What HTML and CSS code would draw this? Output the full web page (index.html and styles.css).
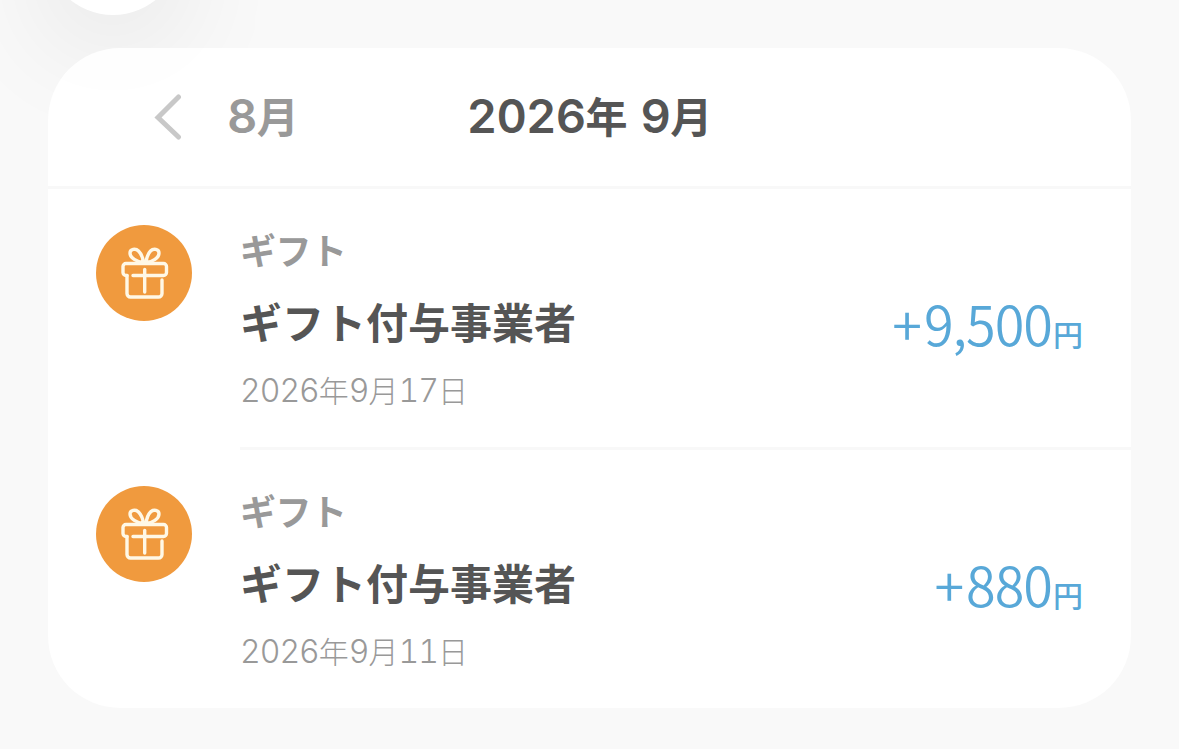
FILE: index.html
```html
<!DOCTYPE html>
<html lang="ja">
<head>
    <meta charset="UTF-8">
    <meta name="viewport" content="width=device-width, initial-scale=1.0">
    <title>ギフト履歴</title>
    <link rel="stylesheet" href="styles.css">
</head>
<body>
    <div class="round-button"></div>

    <svg width="0" height="0" class="sprite">
        <symbol id="gift" viewBox="0 0 96 96">
            <g fill="none" stroke="#fff8e6" stroke-width="3.400" stroke-linecap="round" stroke-linejoin="round">
                <path d="M47.500 37.500C41 37 34 33 34 28c0-4 5.500-5 8.500-2 3 3 4.500 7.500 5 11.500zM50 37.500c6.500-.5 13-4.500 13-9.500 0-4-5.500-5-8.500-2-3 3-4 7.500-4.500 11.500z"/>
                <path d="M31 50.500h-1a3 3 0 0 1-3-3v-6a3 3 0 0 1 3-3h37.500a3 3 0 0 1 3 3v6a3 3 0 0 1-3 3H37"/>
                <path d="M31 50.500v18a3.500 3.500 0 0 0 3.500 3.500h28a3.500 3.500 0 0 0 3.500-3.500V55"/>
                <path d="M48.700 44.500v22.500"/>
            </g>
        </symbol>
    </svg>

    <main class="card">
        <header class="month-nav">
            <a class="prev" href="#">
                <svg class="chevron" viewBox="0 0 28 46">
                    <path d="M24.500 3L4 23.500 24.500 43" fill="none" stroke="#c8c8c8" stroke-width="5" stroke-linecap="round"/>
                </svg>
                <span class="label"><span class="num">8</span>月</span>
            </a>
            <h1 class="month label"><span class="num">2026</span>年<span class="num gap">9</span>月</h1>
        </header>

        <ul class="history">
            <li class="item">
                <svg class="icon"><use href="#gift"/></svg>
                <div class="detail">
                    <div class="info">
                        <p class="type">ギフト</p>
                        <p class="name">ギフト付与事業者</p>
                        <p class="date"><span class="day">2026</span>年<span class="day">9</span>月<span class="day">17</span>日</p>
                    </div>
                    <p class="amount"><span class="plus">+</span>9,500<span class="yen">円</span></p>
                </div>
            </li>
            <li class="item">
                <svg class="icon"><use href="#gift"/></svg>
                <div class="detail">
                    <div class="info">
                        <p class="type">ギフト</p>
                        <p class="name">ギフト付与事業者</p>
                        <p class="date"><span class="day">2026</span>年<span class="day">9</span>月<span class="day">11</span>日</p>
                    </div>
                    <p class="amount"><span class="plus">+</span>880<span class="yen">円</span></p>
                </div>
            </li>
        </ul>
    </main>
</body>
</html>
```
FILE: styles.css
```css
:root {
    --bg-color: #f9f9f9;
    --line-color: #f8f8f8;
    --text-color: #555;
    --sub-color: #999;
    --gift-color: #f09a3e;
    --amount-color: #58a8d8;
}

* {
    margin: 0;
    padding: 0;
    box-sizing: border-box;
}

body {
    font-family: "Noto Sans CJK JP", sans-serif;
    background-color: var(--bg-color);
    color: var(--text-color);
    height: 749px;
    padding: 48px;
    overflow: hidden;
}

/* floating button cut off by the top edge */
.round-button {
    position: absolute;
    top: -121px;
    left: 45px;
    width: 136px;
    height: 136px;
    border-radius: 50%;
    background-color: #fff;
    box-shadow: 0 30px 120px rgba(0, 0, 0, 0.09);
}

.sprite {
    position: absolute;
}

.card {
    position: relative;
    width: 1083px;
    height: 660px;
    border-radius: 72px;
    background-color: rgba(255, 255, 255, 0.9);
    overflow: hidden;
}

.month-nav {
    display: grid;
    grid-template-columns: 1fr auto 1fr;
    align-items: center;
    height: 141px;
    border-bottom: 3px solid var(--line-color);
    font-size: 42px;
    line-height: 60px;
}

.prev {
    display: flex;
    align-items: center;
    gap: 45px;
    padding-left: 106px;
    color: var(--sub-color);
    font-weight: bold;
    text-decoration: none;
}

.chevron {
    width: 28px;
    height: 46px;
}

.label {
    padding-bottom: 4px;
}

.month {
    font-size: 42px;
    font-weight: bold;
}

.num {
    font-family: Inter, sans-serif;
    font-size: 47px;
    font-weight: 600;
    letter-spacing: -0.7px;
    font-feature-settings: "tnum";
}

.gap {
    margin-left: 13px;
}

.history {
    list-style: none;
}

.item {
    display: flex;
    gap: 48px;
    padding-left: 48px;
}

.icon {
    width: 96px;
    height: 96px;
    margin-top: 36px;
    border-radius: 50%;
    background-color: var(--gift-color);
}

.detail {
    flex: 1;
    display: flex;
    justify-content: space-between;
    height: 261px;
    padding: 33px 48px 0 0;
    border-bottom: 3px solid var(--line-color);
}

.item:last-child .detail {
    border-bottom: none;
}

.type {
    font-size: 36px;
    font-weight: bold;
    line-height: 54px;
    letter-spacing: -0.5px;
    color: var(--sub-color);
}

.name {
    margin-top: 13px;
    font-size: 42px;
    font-weight: bold;
    line-height: 64px;
}

.date {
    margin-top: 13px;
    font-size: 30px;
    font-weight: 300;
    line-height: 46px;
    color: var(--sub-color);
}

.day {
    font-family: Inter, sans-serif;
    font-size: 32px;
    letter-spacing: -1px;
    font-feature-settings: "tnum";
}

.amount {
    padding-top: 65px;
    font-size: 54px;
    font-weight: 350;
    line-height: 72px;
    letter-spacing: -1px;
    color: var(--amount-color);
}

.plus {
    margin-right: 3px;
}

.yen {
    margin-left: 1px;
    font-size: 30px;
    font-weight: 500;
    line-height: 1;
    letter-spacing: 0;
}
```
